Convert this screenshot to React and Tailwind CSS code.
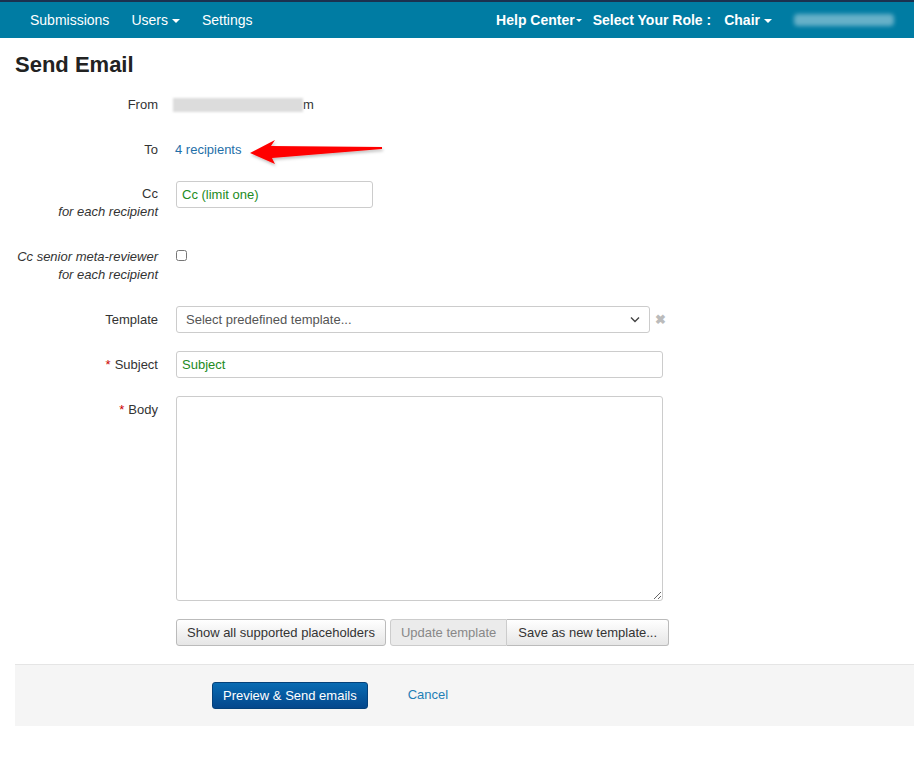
import React from 'react';

const Caret = () => (
  <span className="inline-block ml-1 align-middle border-x-[4px] border-x-transparent border-t-[4px] border-t-white" />
);

const Label = ({ children, required }) => (
  <div className="w-[143px] shrink-0 text-right text-[13px] text-[#333] leading-[18px]">
    {required && <span className="text-[#c00] mr-1">*</span>}
    {children}
  </div>
);

const App = () => {
  return (
    <div className="min-h-[764px] bg-white text-[#333] font-['Liberation_Sans',Arial,sans-serif]">
      <nav className="h-[38px] bg-[#007ca3] border-t-2 border-[#1b3150] flex items-center text-white text-[14px]">
        <div className="flex items-center gap-[22px] pl-[30px]">
          <span>Submissions</span>
          <span>Users<Caret /></span>
          <span>Settings</span>
        </div>
        <div className="ml-auto flex items-center font-bold pr-[20px]">
          <span>Help Center</span><span className="inline-block ml-[1px] border-x-[3px] border-x-transparent border-t-[3px] border-t-white" />
          <span className="ml-[11px]">Select Your Role :</span>
          <span className="ml-[13px]">Chair<Caret /></span>
          <span className="ml-[22px] w-[100px] h-[12px] rounded bg-white/40 blur-[2px]" />
        </div>
      </nav>

      <div className="px-[15px] pt-[14px]">
        <h1 className="text-[22px] font-bold text-[#222] leading-[26px]">Send Email</h1>

        <div className="mt-[18px] flex items-start">
          <Label>From</Label>
          <div className="ml-[15px] relative text-[13px] leading-[18px] flex items-center">
            <span className="inline-block w-[130px] h-[14px] bg-[#dcdcdc] blur-[1px]" />
            <span>m</span>
          </div>
        </div>

        <div className="mt-[27px] flex items-start relative">
          <Label>To</Label>
          <a className="ml-[17px] text-[13px] leading-[18px] text-[#1f6fa8]">4 recipients</a>
          <svg className="absolute left-[225px] top-[-10px]" width="150" height="40" viewBox="0 0 150 40">
            <defs>
              <filter id="sh" x="-10%" y="-30%" width="120%" height="160%">
                <feDropShadow dx="1" dy="2" stdDeviation="1.5" floodColor="#000" floodOpacity="0.25" />
              </filter>
            </defs>
            <path d="M10 22 L35 9 L31 15 L142 16 L142 18 L32 27 L35 33 Z" fill="#f00" filter="url(#sh)" />
          </svg>
        </div>

        <div className="mt-[22px] flex items-start">
          <div className="w-[143px] shrink-0 text-right text-[13px] leading-[18px] pt-[4px]">
            Cc<br /><i>for each recipient</i>
          </div>
          <input
            className="ml-[18px] w-[197px] h-[27px] border border-[#ccc] rounded-[3px] px-[5px] text-[13px] text-[#228b22] placeholder:text-[#228b22] outline-none"
            placeholder="Cc (limit one)"
          />
        </div>

        <div className="mt-[27px] flex items-start">
          <div className="w-[143px] shrink-0 text-right text-[13px] leading-[18px] italic">
            Cc senior meta-reviewer<br />for each recipient
          </div>
          <input type="checkbox" className="ml-[18px] mt-[2px] w-[11px] h-[11px]" />
        </div>

        <div className="mt-[22px] flex items-center">
          <Label>Template</Label>
          <div className="ml-[18px] w-[474px] h-[27px] border border-[#ccc] rounded-[3px] px-[9px] flex items-center justify-between text-[13px] text-[#555]">
            <span>Select predefined template...</span>
            <svg width="10" height="7" viewBox="0 0 10 7"><path d="M1 1.5 L5 5.5 L9 1.5" fill="none" stroke="#444" strokeWidth="1.4" /></svg>
          </div>
          <span className="ml-[5px] text-[#bbb] text-[13px] font-bold">✖</span>
        </div>

        <div className="mt-[18px] flex items-center">
          <Label required>Subject</Label>
          <input
            className="ml-[18px] w-[487px] h-[27px] border border-[#ccc] rounded-[3px] px-[5px] text-[13px] text-[#228b22] placeholder:text-[#228b22] outline-none"
            placeholder="Subject"
          />
        </div>

        <div className="mt-[18px] flex items-start">
          <div className="pt-[5px]"><Label required>Body</Label></div>
          <textarea className="ml-[18px] w-[487px] h-[205px] border border-[#ccc] rounded-[3px] outline-none" />
        </div>

        <div className="mt-[18px] flex items-center pl-[161px] text-[13px]">
          <button className="h-[27px] px-[10px] border border-[#bbb] rounded-[3px] bg-gradient-to-b from-white to-[#e6e6e6] text-[#333]">
            Show all supported placeholders
          </button>
          <div className="ml-[4px] flex">
            <button className="h-[27px] px-[10px] border border-[#ccc] rounded-l-[3px] bg-[#ebebeb] text-[#888]">
              Update template
            </button>
            <button className="h-[27px] px-[11px] border border-l-0 border-[#bbb] rounded-r-[3px] bg-gradient-to-b from-white to-[#e6e6e6] text-[#333]">
              Save as new template...
            </button>
          </div>
        </div>

        <div className="mt-[18px] h-[62px] bg-[#f5f5f5] border-t border-[#e5e5e5] -mr-[15px] flex items-center pl-[197px] text-[13px]">
          <button className="h-[27px] px-[10px] rounded-[3px] border border-[#04417a] bg-gradient-to-b from-[#0a6cb3] to-[#04478c] text-white">
            Preview &amp; Send emails
          </button>
          <a className="ml-[40px] text-[#1f7fb5] -mt-[2px]">Cancel</a>
        </div>
      </div>
    </div>
  );
};

export default App;
